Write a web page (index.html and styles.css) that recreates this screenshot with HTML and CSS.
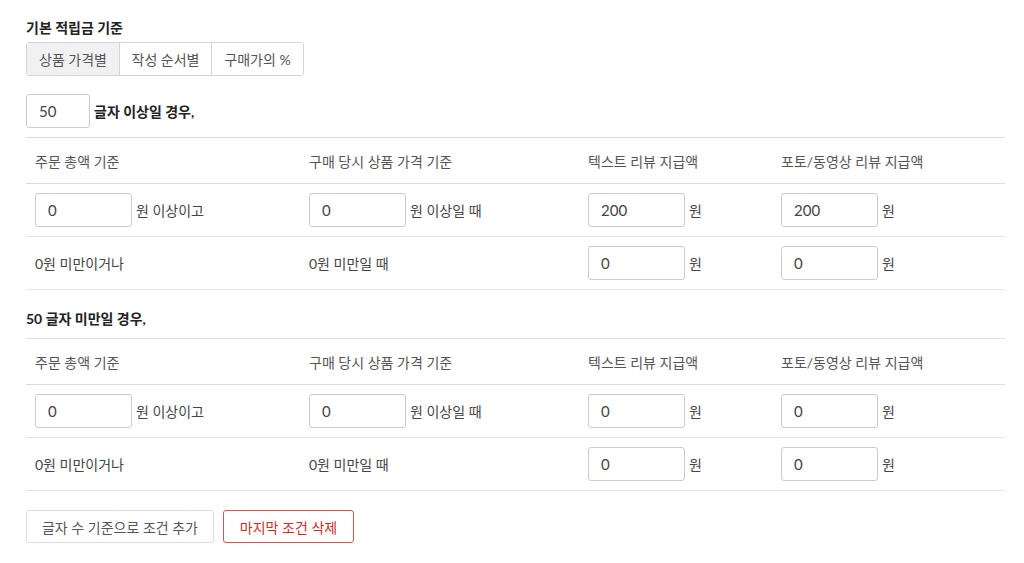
FILE: index.html
```html
<!DOCTYPE html>
<html lang="ko">
<head>
    <meta charset="UTF-8">
    <title>적립금 기준</title>
    <link rel="stylesheet" href="styles.css">
</head>
<body>
    <div class="page">
        <h3 class="title">기본 적립금 기준</h3>
        <div class="seg">
            <button class="seg-btn on">상품 가격별</button>
            <button class="seg-btn">작성 순서별</button>
            <button class="seg-btn">구매가의 %</button>
        </div>

        <div class="len-row">
            <input class="inp inp-len" type="text" value="50">
            <span class="len-label">글자 이상일 경우,</span>
        </div>

        <div class="tbl">
            <div class="tr th">
                <div class="td">주문 총액 기준</div>
                <div class="td">구매 당시 상품 가격 기준</div>
                <div class="td">텍스트 리뷰 지급액</div>
                <div class="td">포토/동영상 리뷰 지급액</div>
            </div>
            <div class="tr">
                <div class="td"><input class="inp" type="text" value="0"> 원 이상이고</div>
                <div class="td"><input class="inp" type="text" value="0"> 원 이상일 때</div>
                <div class="td"><input class="inp" type="text" value="200"> 원</div>
                <div class="td"><input class="inp" type="text" value="200"> 원</div>
            </div>
            <div class="tr">
                <div class="td">0원 미만이거나</div>
                <div class="td">0원 미만일 때</div>
                <div class="td"><input class="inp" type="text" value="0"> 원</div>
                <div class="td"><input class="inp" type="text" value="0"> 원</div>
            </div>
        </div>

        <h4 class="sub-title">50 글자 미만일 경우,</h4>

        <div class="tbl">
            <div class="tr th">
                <div class="td">주문 총액 기준</div>
                <div class="td">구매 당시 상품 가격 기준</div>
                <div class="td">텍스트 리뷰 지급액</div>
                <div class="td">포토/동영상 리뷰 지급액</div>
            </div>
            <div class="tr">
                <div class="td"><input class="inp" type="text" value="0"> 원 이상이고</div>
                <div class="td"><input class="inp" type="text" value="0"> 원 이상일 때</div>
                <div class="td"><input class="inp" type="text" value="0"> 원</div>
                <div class="td"><input class="inp" type="text" value="0"> 원</div>
            </div>
            <div class="tr">
                <div class="td">0원 미만이거나</div>
                <div class="td">0원 미만일 때</div>
                <div class="td"><input class="inp" type="text" value="0"> 원</div>
                <div class="td"><input class="inp" type="text" value="0"> 원</div>
            </div>
        </div>

        <div class="actions">
            <button class="btn btn-add">글자 수 기준으로 조건 추가</button>
            <button class="btn btn-danger">마지막 조건 삭제</button>
        </div>
    </div>
</body>
</html>
```

FILE: styles.css
```css
* {
    margin: 0;
    padding: 0;
    box-sizing: border-box;
}

body {
    background: #fff;
    font-family: "Lato", "Noto Sans CJK KR", sans-serif;
    font-size: 14px;
    color: #444;
}

.page {
    padding: 18px 19px 0 26px;
}

.title {
    font-size: 14px;
    font-weight: bold;
    line-height: 20px;
    color: #222;
}

.seg {
    display: inline-flex;
    margin-top: 4px;
    border: 1px solid #d4d4d4;
    border-radius: 3px;
    overflow: hidden;
}

.seg-btn {
    height: 32px;
    width: 92px;
    background: #fff;
    border: none;
    border-left: 1px solid #d4d4d4;
    font-family: inherit;
    font-size: 14px;
    color: #555;
}

.seg-btn:first-child {
    border-left: none;
}

.seg-btn.on {
    background: #f1f1f3;
}

.len-row {
    display: flex;
    align-items: center;
    margin-top: 18px;
}

.inp {
    width: 97px;
    height: 34px;
    border: 1px solid #ccc;
    border-radius: 3px;
    padding: 0 12px;
    font-family: inherit;
    font-size: 15px;
    color: #444;
    margin-right: 4px;
}

.inp-len {
    width: 64px;
}

.len-label {
    font-weight: bold;
    color: #222;
}

.tbl {
    margin-top: 9px;
    border-top: 1px solid #ddd;
}

.tr {
    display: grid;
    grid-template-columns: 274px 279px 193px 1fr;
    align-items: center;
    height: 53px;
    border-bottom: 1px solid #e4e4e4;
}

.tr.th {
    height: 46px;
    border-bottom-color: #ddd;
    color: #555;
}

.td {
    padding-left: 9px;
    display: flex;
    align-items: center;
    white-space: nowrap;
}

.sub-title {
    font-size: 14px;
    font-weight: bold;
    line-height: 20px;
    color: #222;
    margin-top: 19px;
}

.actions {
    display: flex;
    gap: 9px;
    margin-top: 19px;
}

.btn {
    height: 33px;
    padding: 0;
    background: #fff;
    border: 1px solid #ddd;
    border-radius: 3px;
    font-family: inherit;
    font-size: 14px;
    color: #555;
}

.btn-add {
    width: 188px;
}

.btn-danger {
    width: 131px;
    border-color: #d9534f;
    color: #c9302c;
}
```
